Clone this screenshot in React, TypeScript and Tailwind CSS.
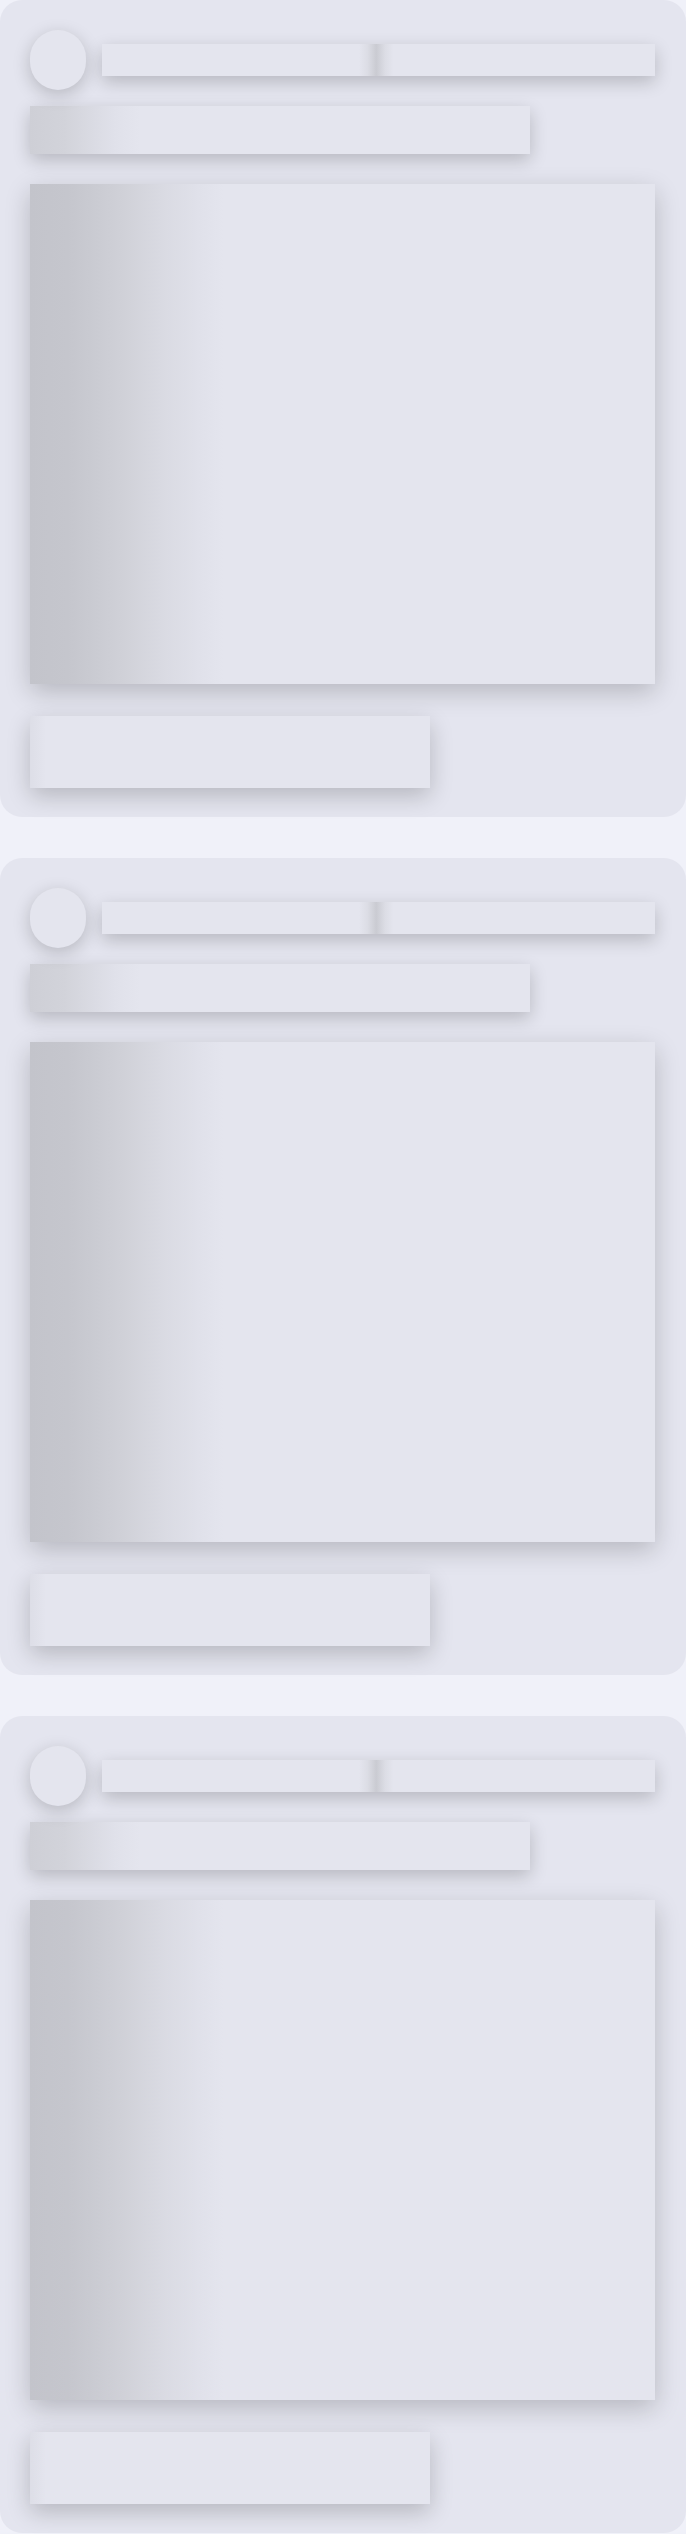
import React from "react";

// Skeleton placeholder for a feed post, repeated three times
const PostSkeleton: React.FC = () => {
  return (
    <div className="rounded-[22px] bg-[#e4e5ef] pt-[30px] pb-[29px] pl-[30px] pr-[31px]">
      <div className="flex items-center gap-4 h-[60px]">
        <div className="w-[56px] h-[60px] shrink-0 rounded-full bg-[#e4e5ee] shadow-[0_5px_18px_rgba(0,0,0,0.2)]" />
        <div className="flex-1 h-[32px] bg-[linear-gradient(90deg,#e4e5ee_0%,#e4e5ee_46.5%,#dcdde5_48%,#cacbd2_49.6%,#dcdde5_51.2%,#e4e5ee_52.7%,#e4e5ee_100%)] shadow-[0_6px_18px_rgba(0,0,0,0.2)]" />
      </div>

      <div className="mt-4 w-[500px] h-[48px] bg-[linear-gradient(90deg,#cecfd6_0%,#d2d3da_7%,#d9dae2_12%,#e0e1ea_17%,#e4e5ee_22%,#e4e5ee_100%)] shadow-[0_6px_18px_rgba(0,0,0,0.2)]" />

      <div className="mt-[30px] h-[500px] bg-[linear-gradient(90deg,#c3c4cb_0%,#c5c6cd_6%,#c9cad1_9.5%,#d0d1d8_15%,#d9dae2_21%,#e0e1ea_27%,#e4e5ee_31%,#e4e5ee_100%)] shadow-[0_8px_24px_rgba(0,0,0,0.2)]" />

      <div className="mt-8 w-[400px] h-[72px] bg-[linear-gradient(90deg,#dddee7_0%,#e4e5ee_4%,#e4e5ee_100%)] shadow-[0_8px_22px_rgba(0,0,0,0.2)]" />
    </div>
  );
};

const App: React.FC = () => {
  return (
    <main className="min-h-screen bg-[#f0f1f9] font-['Liberation_Sans',sans-serif]">
      <div className="flex flex-col gap-[41px]">
        <PostSkeleton />
        <PostSkeleton />
        <PostSkeleton />
      </div>
    </main>
  );
};

export default App;
